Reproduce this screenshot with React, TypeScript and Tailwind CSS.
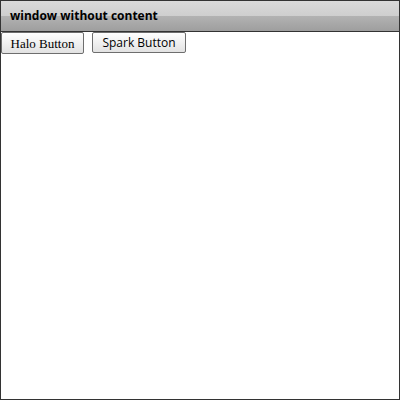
import React from 'react';

const App: React.FC = () => {
  return (
    <div className="w-[400px] h-[400px] bg-white border border-[#333333] flex flex-col overflow-hidden">
      <div className="h-[31px] shrink-0 border-b border-[#333333] flex items-center pl-[9px] bg-[linear-gradient(to_bottom,#dadada_0%,#cecece_50%,#b2b2b2_51%,#9e9e9e_100%)]">
        <span className="text-[12px] font-bold text-black" style={{ fontFamily: '"Open Sans", sans-serif' }}>
          window without content
        </span>
      </div>
      <div className="flex items-start">
        <button className="h-[22px] w-[83px] border border-[#6e6e6e] rounded-[2px] bg-[linear-gradient(to_bottom,#ffffff,#e2e2e2)] text-[13px] text-black leading-none pt-[1px]" style={{ fontFamily: '"Liberation Serif", serif' }}>
          Halo Button
        </button>
        <button className="ml-[8px] h-[21px] w-[94px] border border-[#6e6e6e] rounded-[2px] bg-[linear-gradient(to_bottom,#ffffff,#e2e2e2)] text-[12px] text-black leading-none" style={{ fontFamily: '"Open Sans", sans-serif' }}>
          Spark Button
        </button>
      </div>
    </div>
  );
};

export default App;
